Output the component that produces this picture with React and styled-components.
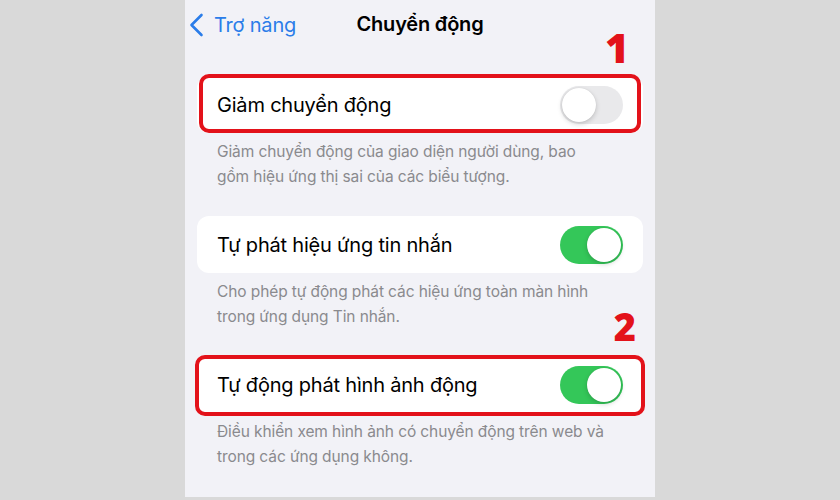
import React from 'react';
import styled, { createGlobalStyle } from 'styled-components';

const settings = [
  {
    label: 'Giảm chuyển động',
    desc: ['Giảm chuyển động của giao diện người dùng, bao', 'gồm hiệu ứng thị sai của các biểu tượng.'],
    on: false,
    mark: '1',
    frame: { top: -2, bottom: 0, side: 2 },
  },
  {
    label: 'Tự phát hiệu ứng tin nhắn',
    desc: ['Cho phép tự động phát các hiệu ứng toàn màn hình', 'trong ứng dụng Tin nhắn.'],
    on: true,
  },
  {
    label: 'Tự động phát hình ảnh động',
    desc: ['Điều khiển xem hình ảnh có chuyển động trên web và', 'trong các ứng dụng không.'],
    on: true,
    mark: '2',
    frame: { top: -1, bottom: -3, side: -2 },
  },
];

const App = () => {
  const sections = settings.map((item, index) => {
    return <Section key={index}>
      {item.mark ? <Marker $index={index}>{item.mark}</Marker> : ''}
      <Card>
        <Label>{item.label}</Label>
        <Toggle $on={item.on}><Knob $on={item.on} /></Toggle>
        {item.frame ? <Frame $top={item.frame.top} $bottom={item.frame.bottom} $side={item.frame.side} /> : ''}
      </Card>
      <Desc>
        {item.desc.map((line, i) => <p key={i}>{line}</p>)}
      </Desc>
    </Section>
  });

  return (
    <Page>
      <GlobalStyle />
      <Phone>
        <Nav>
          <Back>
            <svg width="15" height="24" viewBox="0 0 15 24">
              <polyline points="12.5,2 2.5,12 12.5,22" fill="none" stroke="#2b7de9" strokeWidth="2.6" strokeLinecap="round" strokeLinejoin="round" />
            </svg>
            <span>Trợ năng</span>
          </Back>
          <Title>Chuyển động</Title>
        </Nav>
        <List>{sections}</List>
      </Phone>
    </Page>
  )
}

const GlobalStyle = createGlobalStyle`
  * { box-sizing: border-box; margin: 0; padding: 0; }
  body {
    margin: 0;
    background: #d9d9d9;
    font-family: Inter, "Noto Sans", sans-serif;
  }
`

const Page = styled.div`
  width: 840px;
  height: 500px;
  background: #d9d9d9;
  display: flex;
  justify-content: center;
  overflow: hidden;
`

const Phone = styled.div`
  width: 470px;
  height: 497px;
  background: #f2f2f7;
  display: flex;
  flex-direction: column;
`

const Nav = styled.div`
  height: 48px;
  position: relative;
  display: flex;
  align-items: center;
  justify-content: center;
`

const Back = styled.div`
  position: absolute;
  left: 4px;
  top: 13px;
  display: flex;
  align-items: center;
  gap: 10px;
  color: #2b7de9;
  font-size: 20px;
  letter-spacing: -0.2px;
`

const Title = styled.h1`
  font-size: 20px;
  font-weight: 600;
  color: #000;
  letter-spacing: -0.2px;
`

const List = styled.div`
  padding: 28px 12px 0;
  display: flex;
  flex-direction: column;
  gap: 27px;
`

const Section = styled.div`
  position: relative;
`

const Marker = styled.div`
  position: absolute;
  right: ${p => p.$index === 0 ? '14px' : '7px'};
  top: ${p => p.$index === 0 ? '-49px' : '-49px'};
  color: #e3121a;
  font-family: "Open Sans", Inter, sans-serif;
  font-size: ${p => p.$index === 0 ? '41px' : '38px'};
  font-weight: 800;
  line-height: 1;
`

const Card = styled.div`
  position: relative;
  height: 57px;
  background: #fff;
  border-radius: 12px;
  display: flex;
  align-items: center;
  justify-content: space-between;
  padding: 0 20px;
`

const Frame = styled.div`
  position: absolute;
  top: ${p => p.$top}px;
  bottom: ${p => p.$bottom}px;
  left: ${p => p.$side}px;
  right: ${p => p.$side}px;
  border: 4px solid #e3121a;
  border-radius: 10px;
  pointer-events: none;
`

const Label = styled.span`
  font-size: 20px;
  color: #000;
  letter-spacing: -0.2px;
`

const Toggle = styled.div`
  width: 63px;
  height: 38px;
  border-radius: 19px;
  background: ${p => p.$on ? '#34c759' : '#e9e9eb'};
  padding: 2px;
  display: flex;
  justify-content: ${p => p.$on ? 'flex-end' : 'flex-start'};
`

const Knob = styled.div`
  width: 34px;
  height: 34px;
  border-radius: 50%;
  background: #fff;
  box-shadow: 0 2px 5px rgba(0, 0, 0, 0.18), 0 0 1px rgba(0, 0, 0, 0.12);
`

const Desc = styled.div`
  padding: 7px 20px 0;
  color: #8a8a8e;
  font-size: 15.5px;
  line-height: 24.5px;
  letter-spacing: -0.1px;
`

export default App;
